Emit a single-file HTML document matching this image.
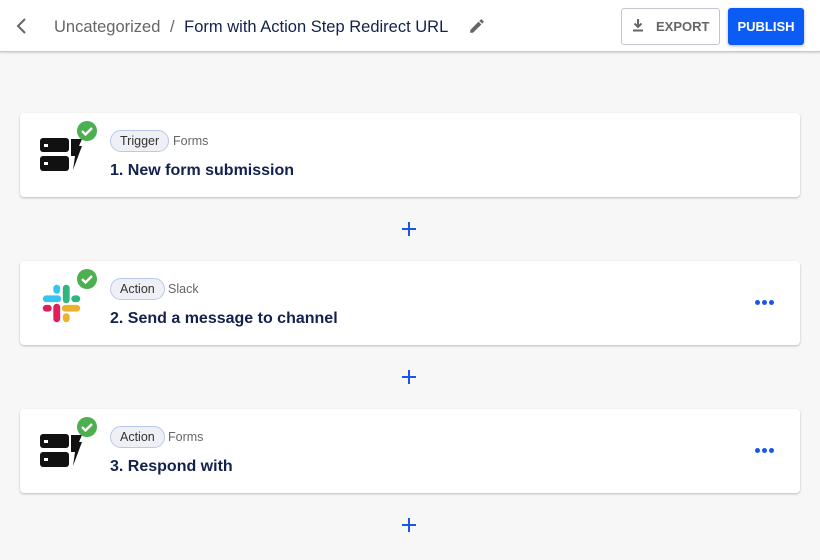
<!DOCTYPE html>
<html><head><style>
*{box-sizing:border-box;margin:0;padding:0}
body{width:820px;height:560px;background:#f7f7f7;font-family:"Liberation Sans",sans-serif;position:relative;overflow:hidden}
.hdr{position:absolute;left:0;top:0;width:820px;height:52px;background:#fff;border-bottom:1px solid #c8c8c8;box-shadow:0 1px 2px rgba(0,0,0,.15)}
.card{position:absolute;left:20px;width:780px;height:84px;background:#fff;border-radius:4px;box-shadow:0 1px 2px rgba(0,0,0,.25)}
.badge{position:absolute;left:90px;top:17px;height:22px;padding:0 9px;border:1px solid #b9c8ee;background:#eef0f5;border-radius:11px;font-size:12.5px;line-height:20px;color:#333}
.app{position:absolute;top:21px;font-size:12.5px;color:#666}
.title{position:absolute;left:90px;top:49px;font-size:16px;font-weight:bold;color:#13214e}
.plus{position:absolute;left:401px;width:16px;height:16px}
.dots{position:absolute;left:735px;top:39px;display:flex;gap:2px}
.dots i{display:block;width:5px;height:5px;border-radius:50%;background:#1a56e8}
.chk{position:absolute;left:56px;top:7px}
</style></head><body>
<div class="hdr">
<svg style="position:absolute;left:14px;top:16px" width="16" height="20" viewBox="0 0 16 20"><path d="M11 3 L4 10 L11 17" fill="none" stroke="#666" stroke-width="2"/></svg>
<div style="position:absolute;left:54px;top:18px;font-size:16.5px;color:#666">Uncategorized <span style="margin:0 5px">/</span> <span style="color:#13214e">Form with Action Step Redirect URL</span></div>
<svg style="position:absolute;left:468px;top:17px" width="18" height="18" viewBox="0 0 24 24"><path d="M3 17.25V21h3.75L17.81 9.94l-3.75-3.75L3 17.25zM20.71 7.04a1 1 0 000-1.41l-2.34-2.34a1 1 0 00-1.41 0l-1.83 1.83 3.75 3.75 1.83-1.83z" fill="#666"/></svg>
<div style="position:absolute;left:621px;top:8px;width:99px;height:37px;border:1px solid #c4c4d0;border-radius:3px;font-size:13px;font-weight:bold;color:#666;line-height:35px;padding-left:34px">EXPORT</div>
<svg style="position:absolute;left:632px;top:18px" width="12" height="14" viewBox="0 0 12 14"><path d="M6 1v8M2.5 5.5L6 9l3.5-3.5M1 12.5h10" fill="none" stroke="#666" stroke-width="2"/></svg>
<div style="position:absolute;left:728px;top:8px;width:76px;height:37px;background:#0a5cf5;border-radius:3px;font-size:13px;font-weight:bold;color:#fff;line-height:37px;text-align:center;box-shadow:0 1px 3px rgba(0,0,0,.3)">PUBLISH</div>
</div>

<div class="card" style="top:113px">
<svg style="position:absolute;left:20px;top:21px" width="46" height="40" viewBox="0 0 46 40"><rect x="0" y="4" width="29" height="14" rx="3" fill="#111"/><rect x="0" y="22" width="29" height="15" rx="3" fill="#111"/><rect x="4" y="10" width="4" height="3" fill="#fff"/><rect x="4" y="28" width="4" height="3" fill="#fff"/><path d="M31 5h11l-3 7h3l-9 24 2-14h-4z" fill="#111"/></svg>
<svg class="chk" width="22" height="22" viewBox="0 0 22 22"><circle cx="11" cy="11" r="10" fill="#4caf50"/><path d="M6 11l3.5 3.5L16 8" fill="none" stroke="#fff" stroke-width="2.3"/></svg>
<div class="badge">Trigger</div><div class="app" style="left:153px">Forms</div>
<div class="title">1. New form submission</div>
</div>
<svg class="plus" style="top:221px" viewBox="0 0 16 16"><path d="M8 1v14M1 8h14" stroke="#1a56e8" stroke-width="2"/></svg>

<div class="card" style="top:261px">
<svg style="position:absolute;left:22px;top:23px" width="39" height="39" viewBox="0 0 37 37">
<g stroke-linecap="round" stroke-width="6.5" fill="none">
<path d="M4 14h11" stroke="#36c5f0"/><path d="M14 4v2" stroke="#36c5f0"/>
<path d="M23 4v11" stroke="#2eb67d"/><path d="M33 14h-2" stroke="#2eb67d"/>
<path d="M33 23h-11" stroke="#ecb22e"/><path d="M23 33v-2" stroke="#ecb22e"/>
<path d="M14 33v-11" stroke="#e01e5a"/><path d="M4 23h2" stroke="#e01e5a"/>
</g></svg>
<svg class="chk" width="22" height="22" viewBox="0 0 22 22"><circle cx="11" cy="11" r="10" fill="#4caf50"/><path d="M6 11l3.5 3.5L16 8" fill="none" stroke="#fff" stroke-width="2.3"/></svg>
<div class="badge">Action</div><div class="app" style="left:148px">Slack</div>
<div class="title">2. Send a message to channel</div>
<div class="dots"><i></i><i></i><i></i></div>
</div>
<svg class="plus" style="top:369px" viewBox="0 0 16 16"><path d="M8 1v14M1 8h14" stroke="#1a56e8" stroke-width="2"/></svg>

<div class="card" style="top:409px">
<svg style="position:absolute;left:20px;top:21px" width="46" height="40" viewBox="0 0 46 40"><rect x="0" y="4" width="29" height="14" rx="3" fill="#111"/><rect x="0" y="22" width="29" height="15" rx="3" fill="#111"/><rect x="4" y="10" width="4" height="3" fill="#fff"/><rect x="4" y="28" width="4" height="3" fill="#fff"/><path d="M31 5h11l-3 7h3l-9 24 2-14h-4z" fill="#111"/></svg>
<svg class="chk" width="22" height="22" viewBox="0 0 22 22"><circle cx="11" cy="11" r="10" fill="#4caf50"/><path d="M6 11l3.5 3.5L16 8" fill="none" stroke="#fff" stroke-width="2.3"/></svg>
<div class="badge">Action</div><div class="app" style="left:148px">Forms</div>
<div class="title">3. Respond with</div>
<div class="dots"><i></i><i></i><i></i></div>
</div>
<svg class="plus" style="top:517px" viewBox="0 0 16 16"><path d="M8 1v14M1 8h14" stroke="#1a56e8" stroke-width="2"/></svg>
</body></html>
